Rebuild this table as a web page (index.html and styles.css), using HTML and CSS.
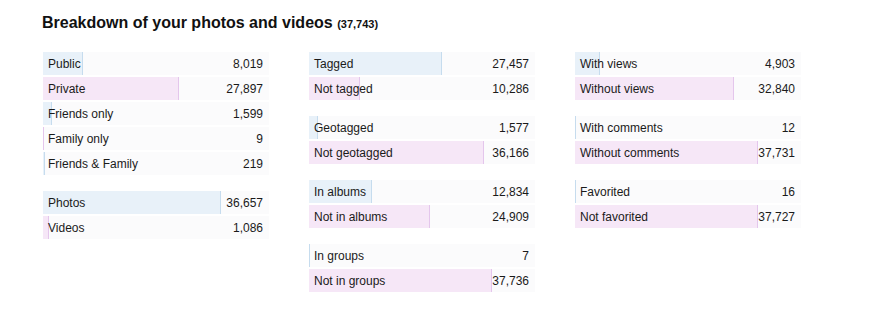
FILE: index.html
```html
<!DOCTYPE html>
<html>
<head>
<meta charset="utf-8">
<link rel="stylesheet" href="styles.css">
</head>
<body>
<div class="page">
  <h1 class="title">Breakdown of your photos and videos <span class="count">(37,743)</span></h1>
  <div class="cols">
    <div class="col">
      <div class="group">
        <div class="row"><div class="label"><span class="bar blue" style="width:21.25%"></span><span class="txt">Public</span></div><div class="num">8,019</div></div>
        <div class="row"><div class="label"><span class="bar pink" style="width:73.91%"></span><span class="txt">Private</span></div><div class="num">27,897</div></div>
        <div class="row"><div class="label"><span class="bar blue" style="width:4.24%"></span><span class="txt">Friends only</span></div><div class="num">1,599</div></div>
        <div class="row"><div class="label"><span class="bar pink" style="width:0.02%"></span><span class="txt">Family only</span></div><div class="num">9</div></div>
        <div class="row"><div class="label"><span class="bar blue" style="width:0.58%"></span><span class="txt">Friends &amp; Family</span></div><div class="num">219</div></div>
      </div>
      <div class="group">
        <div class="row"><div class="label"><span class="bar blue" style="width:97.12%"></span><span class="txt">Photos</span></div><div class="num">36,657</div></div>
        <div class="row"><div class="label"><span class="bar pink" style="width:2.88%"></span><span class="txt">Videos</span></div><div class="num">1,086</div></div>
      </div>
    </div>
    <div class="col">
      <div class="group">
        <div class="row"><div class="label"><span class="bar blue" style="width:72.75%"></span><span class="txt">Tagged</span></div><div class="num">27,457</div></div>
        <div class="row"><div class="label"><span class="bar pink" style="width:27.25%"></span><span class="txt">Not tagged</span></div><div class="num">10,286</div></div>
      </div>
      <div class="group">
        <div class="row"><div class="label"><span class="bar blue" style="width:4.18%"></span><span class="txt">Geotagged</span></div><div class="num">1,577</div></div>
        <div class="row"><div class="label"><span class="bar pink" style="width:95.82%"></span><span class="txt">Not geotagged</span></div><div class="num">36,166</div></div>
      </div>
      <div class="group">
        <div class="row"><div class="label"><span class="bar blue" style="width:34.00%"></span><span class="txt">In albums</span></div><div class="num">12,834</div></div>
        <div class="row"><div class="label"><span class="bar pink" style="width:66.00%"></span><span class="txt">Not in albums</span></div><div class="num">24,909</div></div>
      </div>
      <div class="group">
        <div class="row"><div class="label"><span class="bar blue" style="width:0.02%"></span><span class="txt">In groups</span></div><div class="num">7</div></div>
        <div class="row"><div class="label"><span class="bar pink" style="width:99.98%"></span><span class="txt">Not in groups</span></div><div class="num">37,736</div></div>
      </div>
    </div>
    <div class="col">
      <div class="group">
        <div class="row"><div class="label"><span class="bar blue" style="width:12.99%"></span><span class="txt">With views</span></div><div class="num">4,903</div></div>
        <div class="row"><div class="label"><span class="bar pink" style="width:87.01%"></span><span class="txt">Without views</span></div><div class="num">32,840</div></div>
      </div>
      <div class="group">
        <div class="row"><div class="label"><span class="bar blue" style="width:0.03%"></span><span class="txt">With comments</span></div><div class="num">12</div></div>
        <div class="row"><div class="label"><span class="bar pink" style="width:99.97%"></span><span class="txt">Without comments</span></div><div class="num">37,731</div></div>
      </div>
      <div class="group">
        <div class="row"><div class="label"><span class="bar blue" style="width:0.04%"></span><span class="txt">Favorited</span></div><div class="num">16</div></div>
        <div class="row"><div class="label"><span class="bar pink" style="width:99.96%"></span><span class="txt">Not favorited</span></div><div class="num">37,727</div></div>
      </div>
    </div>
  </div>
</div>
</body>
</html>
```
FILE: styles.css
```css
html, body {
  margin: 0;
  padding: 0;
  background: #ffffff;
}
body {
  font-family: "Liberation Sans", Arial, sans-serif;
  color: #1a1a1a;
}
.page {
  padding: 12px 0 0 42px;
}
.title {
  margin: 0;
  font-size: 16px;
  font-weight: bold;
  line-height: 22px;
  color: #111;
}
.count {
  font-size: 11px;
}
.cols {
  display: flex;
  gap: 40px;
  margin-top: 17px;
  margin-left: 1px;
}
.col {
  width: 226px;
  display: flex;
  flex-direction: column;
  gap: 16px;
}
.group {
  display: flex;
  flex-direction: column;
  gap: 2px;
}
.row {
  display: flex;
  height: 23px;
  background: #fbfbfc;
  font-size: 12px;
}
.label {
  position: relative;
  width: 182px;
  flex: none;
  display: flex;
  align-items: center;
}
.bar {
  position: absolute;
  left: 0;
  top: 0;
  bottom: 0;
  box-sizing: content-box;
}
.bar.blue {
  background: #e8f1f9;
  border-right: 1px solid #c6dcee;
}
.bar.pink {
  background: #f6e7f7;
  border-right: 1px solid #e4c6ec;
}
.txt {
  position: relative;
  padding-left: 5px;
  white-space: nowrap;
}
.num {
  flex: 1;
  display: flex;
  align-items: center;
  justify-content: flex-end;
  padding-right: 6px;
}
```
